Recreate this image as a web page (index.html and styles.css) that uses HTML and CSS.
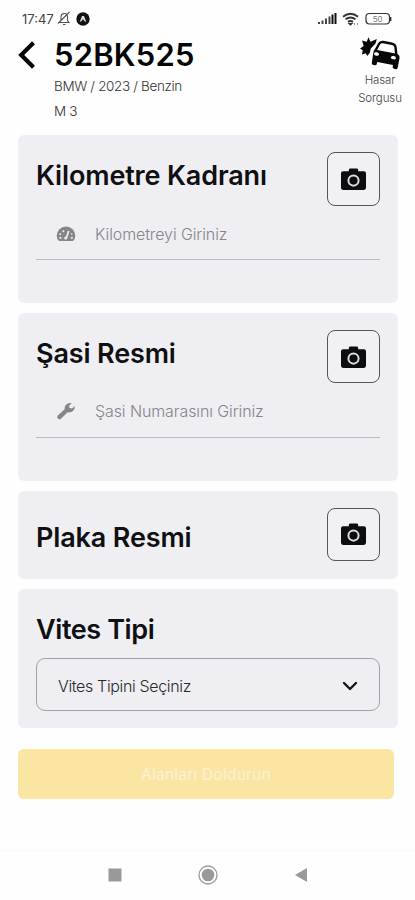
FILE: index.html
```html
<!DOCTYPE html>
<html lang="tr">
<head>
<meta charset="utf-8">
<meta name="viewport" content="width=device-width">
<title>52BK525</title>
<link rel="stylesheet" href="styles.css">
</head>
<body>
<svg class="defs" width="0" height="0">
  <symbol id="camera" viewBox="0 0 24 21">
    <path fill="#0c0d0f" d="M2 3h5.500V1.800Q7.500.500 9 .500h6q1.500 0 1.500 1.300V3H22q2 0 2 2v14q0 2-2 2H2q-2 0-2-2V5q0-2 2-2z"/>
    <circle cx="12" cy="12" r="4.900" fill="none" stroke="#dededf" stroke-width="1.900"/>
  </symbol>
</svg>
<div class="status">
  <span class="time">17:47</span>
  <svg class="bell" width="14" height="15" viewBox="0 0 14 15" fill="none" stroke="#555" stroke-width="1.100"><path d="M2.500 11.500h9.500l-1.500-2V5.500Q10.300 2.500 7.300 2.500T4 5.500v4zM6 13.500h2.500M1 12.500L12.500 1"/></svg>
  <svg class="badge" width="14" height="14" viewBox="0 0 14 14"><circle cx="7" cy="7" r="6.700" fill="#111"/><path d="M3.700 10L6 4h2l2.300 6-2-1L7 7 5.700 9z" fill="#ddd"/></svg>
  <svg class="signal" width="19" height="13" viewBox="0 0 19 13" fill="#444"><path d="M0 10h2v2H0zM3.500 8.500h2V12h-2zM7 6.500h2V12H7zM10.500 4.500h2V12h-2z"/><path fill="#111" d="M13.500 2.500h2V12h-2zM16.500 1h2v11h-2z"/></svg>
  <svg class="wifi" width="18" height="14" viewBox="0 0 18 14" fill="none" stroke="#333" stroke-width="2"><path d="M1 4.700Q8.500-1.200 16 4.700M3.500 7.300q5-3.500 10 0M6 9.800q2.500-1.600 5 0"/><path d="M7 11.500h3l-1.500 1.500zM12 12h1M15 12h1" stroke-width="1.200"/></svg>
  <svg class="battery" width="27" height="14" viewBox="0 0 27 14"><rect x="1" y="1.500" width="23.500" height="10.500" rx="3.500" fill="none" stroke="#333" stroke-width="1.200"/><path d="M25.500 5v4" stroke="#333" stroke-width="1.800"/><text x="12.700" y="9.900" text-anchor="middle">50</text></svg>
</div>
<header class="header">
  <svg class="back" width="18" height="28" viewBox="0 0 18 28" fill="none" stroke="#050505" stroke-width="4.200"><path d="M15.500 1.800L3.200 14l12.300 12.200"/></svg>
  <div class="vehicle">
    <h1 class="plate">52BK525</h1>
    <p class="info">BMW / 2023 / Benzin</p>
    <p class="info">M 3</p>
  </div>
  <div class="damage">
    <svg width="42" height="34" viewBox="0 0 42 34">
      <path fill="#080808" d="M3 3.500l4.700 1.300L9.500.2l2 4.600L17.800 2l-1.300 4.600-4.700 4.900-1 4.200-2.500 3.300-1.600-2.700-3.700 1.200.7-4.300L1 11.500l3.700-2.600z"/>
      <path fill="none" stroke="#080808" stroke-width="2.400" stroke-linejoin="round" d="M16.500 13.500L20 7q1.300-2.400 4-2l9.200 1.800q3 .7 3.300 3.400l.8 7.300"/>
      <path fill="#080808" d="M15.500 12.500l22.300 4.300q3.200 1 2.700 4.500l-1.800 9.500q-.4 1.700-2 1.400l-1.700-.4q-1.600-.4-1.300-2l.3-1.800-15.800-3-.4 2q-.4 1.500-2 1.200l-1.800-.4q-1.500-.4-1.200-1.800l1.400-9.500q.4-3 1.300-4z"/>
      <ellipse cx="17.500" cy="17" rx="2.500" ry="1.700" fill="#fff" transform="rotate(12 17.500 17)"/>
      <ellipse cx="34.500" cy="20.700" rx="2.500" ry="1.700" fill="#fff" transform="rotate(12 34.500 20.700)"/>
    </svg>
    <span>Hasar<br>Sorgusu</span>
  </div>
</header>
<main class="cards">
  <section class="card tall">
    <div class="top"><h2 class="kilo">Kilometre Kadranı</h2><button class="shot"><svg width="25" height="22"><use href="#camera"/></svg></button></div>
    <label class="field">
      <svg width="20" height="16" viewBox="0 0 20 16"><path fill="#85858a" d="M3 15Q.7 13 .7 9.800A9.300 9.300 0 0 1 19.300 9.800Q19.300 13 17 15z"/><path d="M5 8.500l-1.500-.7M7 4.500l.8 1.500M10 13l2.700-8M15.200 8.200l1-.4M3.500 11.800h2M14.800 11.800h2" stroke="#efeef3" stroke-width="1.700"/><circle cx="9.700" cy="12" r="1.500" fill="#efeef3"/></svg>
      <span>Kilometreyi Giriniz</span>
    </label>
  </section>
  <section class="card tall">
    <div class="top"><h2 class="sasi">Şasi Resmi</h2><button class="shot"><svg width="25" height="22"><use href="#camera"/></svg></button></div>
    <label class="field">
      <svg width="20" height="18" viewBox="0 0 20 18"><path fill="#85858a" d="M1.700 13.500l7-6.200Q8.300 3.700 11 2q2.300-1.500 4.700-.7L13 3.800l.5 2.300 2.500.5 2.700-2.500q.5 2.700-1.700 4.800-2.300 2-5.400 1.300L5 16.700q-1.500 1.200-3 0-1.600-1.700-.3-3.200z"/></svg>
      <span>Şasi Numarasını Giriniz</span>
    </label>
  </section>
  <section class="card short">
    <div class="top"><h2 class="plaka">Plaka Resmi</h2><button class="shot"><svg width="25" height="22"><use href="#camera"/></svg></button></div>
  </section>
  <section class="card gear">
    <h2 class="vites">Vites Tipi</h2>
    <div class="select"><span>Vites Tipini Seçiniz</span><svg width="16" height="10" viewBox="0 0 16 10" fill="none" stroke="#151515" stroke-width="2.400" stroke-linecap="round" stroke-linejoin="round"><path d="M2 2l6 6 6-6"/></svg></div>
  </section>
</main>
<button class="submit">Alanları Doldurun</button>
<nav class="nav">
  <svg width="14" height="14"><rect x=".5" y=".5" width="13" height="13" fill="#999"/></svg>
  <svg width="20" height="20"><circle cx="10" cy="10" r="9" fill="none" stroke="#999" stroke-width="1.300"/><circle cx="10" cy="10" r="6.300" fill="#999"/></svg>
  <svg width="14" height="16"><path d="M13 1v14L1 8z" fill="#999"/></svg>
</nav>
</body>
</html>
```
FILE: styles.css
```css
* { box-sizing: border-box; }
body {
  margin: 0;
  width: 415px;
  height: 900px;
  overflow: hidden;
  background: #fefefe;
  color: #101012;
  font-family: Inter, "Liberation Sans", sans-serif;
}
h1, h2, p { margin: 0; }
button { font: inherit; padding: 0; }
svg { display: block; flex: none; }
.defs { display: none; }
.status {
  display: flex;
  align-items: center;
  height: 37px;
  padding: 0 23px 0 22px;
}
.time { width: 35px; font-size: 13px; color: #444; white-space: nowrap; }
.badge { margin-left: 5px; }
.signal { margin-left: auto; }
.wifi { margin-left: 5px; }
.battery { margin-left: 5px; }
.battery text { font-size: 8px; fill: #777; }
.header {
  display: flex;
  align-items: flex-start;
  height: 98px;
  padding: 0 10px 0 18px;
}
.back { margin-top: 4px; }
.vehicle { margin-left: 18px; }
.plate { font-size: 31px; line-height: 35px; font-weight: 600; letter-spacing: .2px; color: #050505; }
.info { padding-top: 2px; margin-bottom: -2px; font-size: 13.5px; line-height: 25px; font-weight: 300; letter-spacing: -.35px; color: #333; }
.damage {
  display: flex;
  flex-direction: column;
  align-items: center;
  width: 50px;
  margin-left: auto;
  font-size: 11.5px;
  line-height: 18px;
  font-weight: 300;
  letter-spacing: -.1px;
  text-align: center;
  color: #444;
}
.cards { display: flex; flex-direction: column; gap: 10px; padding: 0 17px 0 18px; }
.card { padding: 17px 18px 0; border-radius: 6px; background: #efeef3; }
.tall { height: 167.8px; }
.short { height: 88.600px; }
.gear { height: 139px; }
.top { display: flex; justify-content: space-between; height: 54px; }
h2 { font-size: 27px; line-height: 32px; font-weight: 600; letter-spacing: -.15px; white-space: nowrap; }
.top h2 { padding-top: 8px; }
.short .top h2 { padding-top: 14px; }
.shot {
  display: flex;
  align-items: center;
  justify-content: center;
  width: 53px;
  height: 53.500px;
  border: 1px solid #55555a;
  border-radius: 8px;
  background: #f1f0f5;
}
.field {
  display: flex;
  align-items: center;
  height: 54px;
  padding: 2px 0 0 20px;
  border-bottom: 1px solid #bcbbc1;
  font-size: 16px;
  font-weight: 300;
  letter-spacing: -.1px;
  color: #85858a;
}
.field span { margin-left: 19px; }
.vites { padding-top: 8px; letter-spacing: -.4px; }
.select {
  display: flex;
  align-items: center;
  justify-content: space-between;
  height: 53px;
  margin-top: 12px;
  padding: 2px 21px 0;
  border: 1px solid #a2a1a7;
  border-radius: 9px;
  font-size: 16px;
  font-weight: 300;
  letter-spacing: -.35px;
  color: #28282b;
}
.submit {
  display: block;
  width: 376px;
  height: 50px;
  margin: 20.800px 0 0 18px;
  border: 0;
  border-radius: 6px;
  background: #fae5a2;
  color: #fcf1d2;
  font-size: 16px;
  font-weight: 400;
}
.nav {
  display: grid;
  grid-template-columns: 93px 93px 93px;
  justify-content: center;
  justify-items: center;
  align-items: center;
  height: 50px;
  margin-top: 51px;
  border-top: 1px solid #f9f9f9;
}
```
